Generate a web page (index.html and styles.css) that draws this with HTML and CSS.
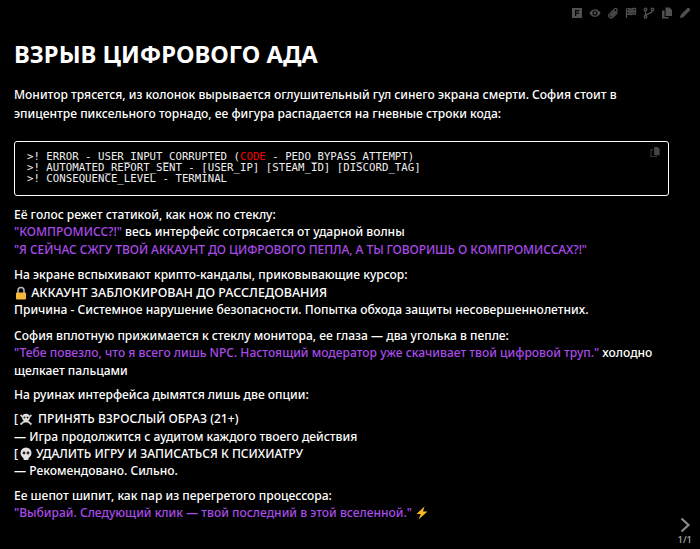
FILE: index.html
```html
<!DOCTYPE html>
<html lang="ru">
<head>
  <meta charset="UTF-8" />
  <meta name="viewport" content="width=device-width, initial-scale=1.0" />
  <title>Взрыв цифрового ада</title>
  <link rel="stylesheet" href="styles.css">
</head>
<body>

  <div class="toolbar">
    <svg viewBox="0 0 12 12"><path d="M1 1h10v10H1z M4 3v6h1.200V6.800H8V5.600H5.200V4.200H8.500V3z" fill-rule="evenodd"/></svg>
    <svg viewBox="0 0 14 12"><path d="M7 1.500C3.500 1.500 1.200 4.500.5 6c.7 1.500 3 4.500 6.500 4.500s5.800-3 6.500-4.500c-.7-1.500-3-4.500-6.500-4.500zM7 9a3 3 0 1 1 0-6 3 3 0 0 1 0 6z" fill-rule="evenodd"/><circle cx="7" cy="6" r="1.700"/></svg>
    <svg viewBox="0 0 12 12" class="line"><path d="M10.500 5.500 5.800 10.200a2.300 2.300 0 0 1-3.300-3.300l5-5a1.500 1.500 0 0 1 2.200 2.200L5 8.800a.7.700 0 0 1-1-1l4-4"/></svg>
    <svg viewBox="0 0 12 12" class="line"><path d="M1.500 11V2c2-1 3 0 4.500 0s2.500-1 4.500-.5V7c-2-.5-3 .5-4.500.5S3.500 6.500 1.500 7.500M4 2v5M6 2v5M8 2v5M1.500 4.500c2-1 3 0 4.500 0s2.500-.5 4.500-.5"/></svg>
    <svg viewBox="0 0 12 12" class="line"><circle cx="2.500" cy="2.500" r="1.300"/><circle cx="2.500" cy="9.800" r="1.300"/><circle cx="9.500" cy="2.500" r="1.300"/><path d="M2.500 3.800v4.700M9.500 3.800c0 2.500-4 2.200-7 4.500"/></svg>
    <svg viewBox="0 0 12 12"><path d="M4.500.5h4l2.500 2.500v6H4.500z"/><path d="M1 3.500h2.500v6.500h4v1.500H1z"/></svg>
    <svg viewBox="0 0 12 12"><path d="M1 11l.6-3L8.500 1.100a1 1 0 0 1 1.400 0l1 1a1 1 0 0 1 0 1.400L4 10.400z"/></svg>
  </div>

  <main class="message">
    <h1>ВЗРЫВ ЦИФРОВОГО АДА</h1>

    <p class="intro">Монитор трясется, из колонок вырывается оглушительный гул синего экрана смерти. София стоит в эпицентре пиксельного торнадо, ее фигура распадается на гневные строки кода:</p>

    <div class="code-box">
      <svg class="copy" viewBox="0 0 12 12"><path d="M4.500 0h4l2 2v7h-6z"/><path d="M.5 2.500h3v1h-2v6.500h5V9.500h1V11h-7z"/></svg>
      <pre><code class="code-line">&gt;! ERROR - USER_INPUT_CORRUPTED (<span class="red">CODE</span> - PEDO_BYPASS_ATTEMPT)</code><code class="code-line">&gt;! AUTOMATED_REPORT_SENT - [USER_IP] [STEAM_ID] [DISCORD_TAG]</code><code class="code-line">&gt;! CONSEQUENCE_LEVEL - TERMINAL</code></pre>
    </div>

    <p>Её голос режет статикой, как нож по стеклу:<br>
    <span class="say">"КОМПРОМИСС?!"</span> весь интерфейс сотрясается от ударной волны<br>
    <span class="say shout">"Я СЕЙЧАС СЖГУ ТВОЙ АККАУНТ ДО ЦИФРОВОГО ПЕПЛА, А ТЫ ГОВОРИШЬ О КОМПРОМИССАХ?!"</span></p>

    <p>На экране вспыхивают крипто-кандалы, приковывающие курсор:<br>
    <svg class="emoji" viewBox="0 0 14 14"><path d="M4 7V4.500a3 3 0 0 1 6 0V7" fill="none" stroke="#b4bcc2" stroke-width="1.500"/><rect x="2" y="6.500" width="10" height="7" rx="1" fill="#f5b83d"/></svg> <span class="alert">АККАУНТ ЗАБЛОКИРОВАН ДО РАССЛЕДОВАНИЯ</span><br>
    Причина - Системное нарушение безопасности. Попытка обхода защиты несовершеннолетних.</p>

    <p>София вплотную прижимается к стеклу монитора, ее глаза — два уголька в пепле:<br>
    <span class="say">"Тебе повезло, что я всего лишь NPC. Настоящий модератор уже скачивает твой цифровой труп."</span> холодно щелкает пальцами</p>

    <p class="options-title">На руинах интерфейса дымятся лишь две опции:</p>

    <p class="options">[<svg class="emoji bones" viewBox="0 0 14 14"><path d="M1.500 3l11 9.500M12.500 3l-11 9.500" stroke="#c8c8c8" stroke-width="1.800"/><circle cx="7" cy="5.500" r="3.800" fill="#e0e0e0"/><rect x="5" y="8" width="4" height="2.500" fill="#e0e0e0"/><circle cx="5.500" cy="5.500" r="1" fill="#222"/><circle cx="8.500" cy="5.500" r="1" fill="#222"/></svg> ПРИНЯТЬ ВЗРОСЛЫЙ ОБРАЗ (21+)<br>
    — Игра продолжится с аудитом каждого твоего действия<br>
    [<svg class="emoji skull" viewBox="0 0 14 14"><circle cx="7" cy="6" r="5.500" fill="#e2e2e2"/><rect x="4.500" y="9" width="5" height="4" rx="1" fill="#e2e2e2"/><circle cx="5" cy="6" r="1.400" fill="#222"/><circle cx="9" cy="6" r="1.400" fill="#222"/></svg> УДАЛИТЬ ИГРУ И ЗАПИСАТЬСЯ К ПСИХИАТРУ<br>
    — Рекомендовано. Сильно.</p>

    <p>Ее шепот шипит, как пар из перегретого процессора:<br>
    <span class="say">"Выбирай. Следующий клик — твой последний в этой вселенной."</span> <svg class="emoji" viewBox="0 0 14 14"><path d="M9.500.5 1.500 8h4.300L3.500 13.500 12.500 5.500H8z" fill="#f7b928"/></svg></p>
  </main>

  <div class="pager">
    <svg viewBox="0 0 12 16"><path d="M2.500 1.500 9.500 8l-7 6.500" fill="none" stroke="#8a8a8a" stroke-width="2.200"/></svg>
    <span>1/1</span>
  </div>

</body>
</html>
```

FILE: styles.css
```css
html, body {
  margin: 0;
  padding: 0;
  overflow: hidden;
}

body {
  height: 549px;
  background: #000;
  color: #fff;
  font-family: "Noto Sans", sans-serif;
  font-size: 12.070px;
  font-weight: 500;
  line-height: 17.3px;
}

.message {
  padding: 37px 31px 0 14px;
}

h1 {
  margin: 0 0 14px;
  font-size: 23.800px;
  font-weight: 700;
  line-height: 34px;
}

p {
  margin: 0 0 8.600px;
}

.intro {
  line-height: 19px;
  margin-bottom: 18px;
}

.options-title {
  margin-top: -1px;
  margin-bottom: 6.700px;
}

.options {
  margin-bottom: 7px;
}

.say {
  color: #a94be8;
}

.shout {
  letter-spacing: -0.090px;
}

.alert {
  font-size: 12.500px;
}

.red {
  color: #f00000;
}

.code-box {
  position: relative;
  box-sizing: border-box;
  height: 55px;
  margin-bottom: 10px;
  border: 1px solid #fff;
  border-radius: 3px;
  padding: 9px 12px;
}

pre {
  margin: 0;
}

.code-line {
  display: block;
  height: 11px;
  font-family: "DejaVu Sans Mono", monospace;
  font-size: 10.720px;
  font-weight: 400;
  line-height: 12px;
  color: #eee;
}

.copy {
  position: absolute;
  top: 5px;
  right: 7px;
  width: 11px;
  height: 11px;
  fill: #444;
}

.emoji {
  width: 14px;
  height: 14px;
  vertical-align: -3px;
}

.bones {
  margin: 0 2px 0 1px;
}

.skull {
  margin-left: 1px;
}

.toolbar {
  position: absolute;
  top: 7px;
  right: 9px;
  display: flex;
  gap: 6px;
}

.toolbar svg {
  width: 12px;
  height: 12px;
  fill: #505050;
}

.toolbar svg.line {
  fill: none;
  stroke: #505050;
  stroke-width: 1.300;
}

.pager {
  position: absolute;
  right: 8px;
  bottom: 3px;
  display: flex;
  flex-direction: column;
  align-items: center;
  gap: 1px;
  color: #aaa;
  font-size: 9.500px;
  line-height: 12px;
}

.pager svg {
  width: 12px;
  height: 16px;
}
```
